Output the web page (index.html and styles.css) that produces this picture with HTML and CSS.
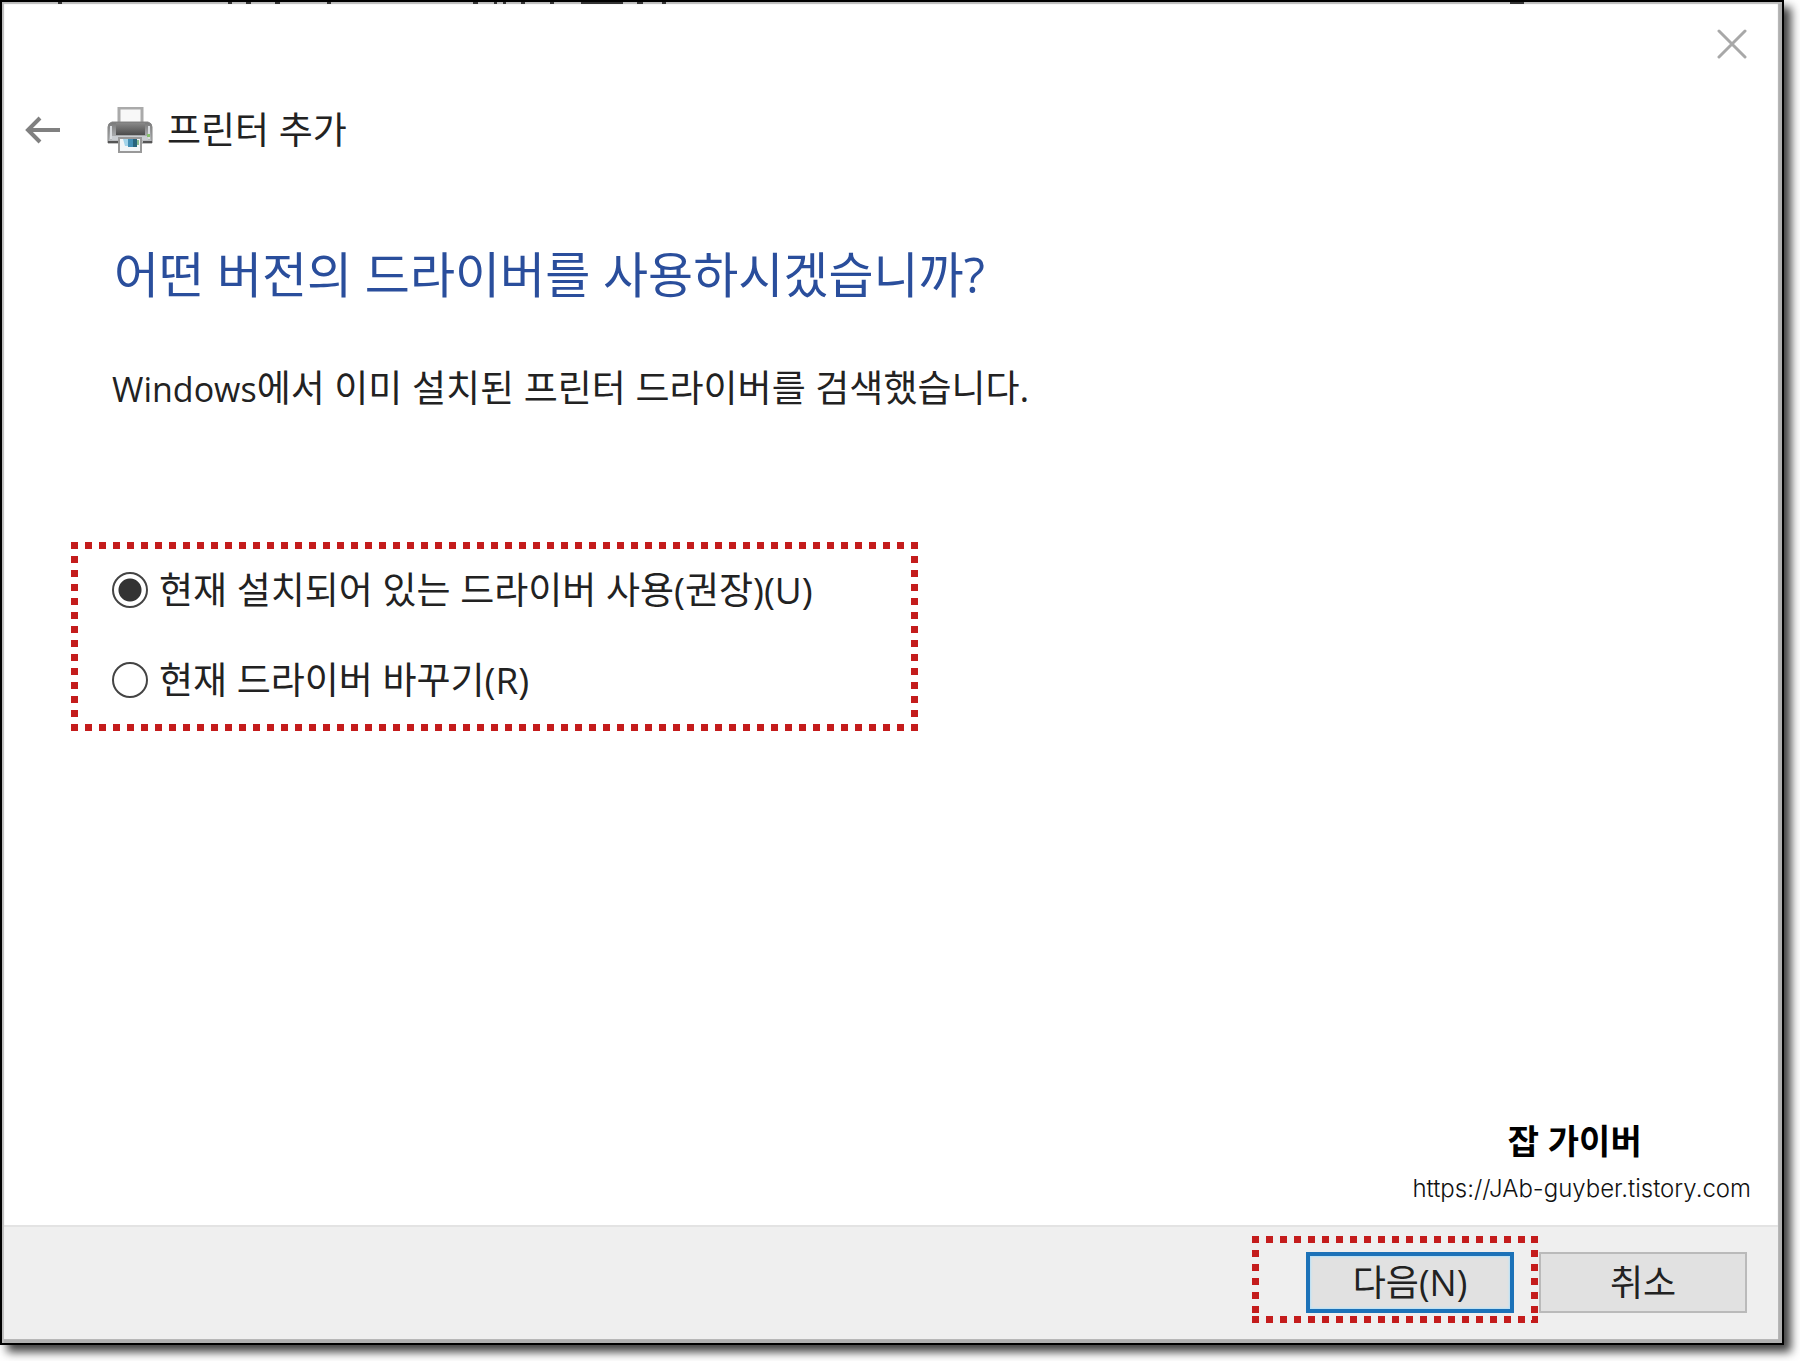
FILE: index.html
```html
<!DOCTYPE html>
<html lang="ko">
<head>
    <meta charset="UTF-8">
    <meta name="viewport" content="width=device-width, initial-scale=1.0">
    <title>프린터 추가</title>
    <link rel="stylesheet" href="styles.css">
</head>
<body>
    <form class="window">
        <svg class="edge" height="2" aria-hidden="true">
            <path d="M56 1h4M226 1h4M244 1h5M273 1h5M325 1h4M471 1h5M492 1h3M501 1h3M519 1h4M548 1h4M579 1h42M635 1h6M660 1h4M1508 1h14" stroke="#333" stroke-width="2"/>
        </svg>
        <div class="titlebar">
            <button class="close" type="button" aria-label="닫기">
                <svg width="30" height="30" viewBox="0 0 30 30"><path d="M2 2l26 26M28 2L2 28" stroke="#a8a8a8" stroke-width="3" stroke-linecap="round"/></svg>
            </button>
        </div>
        <header class="header">
            <button class="back" type="button" aria-label="뒤로">
                <svg width="36" height="28" viewBox="0 0 36 28"><path d="M35 14H3M15 2L3 14l12 12" fill="none" stroke="#808080" stroke-width="4"/></svg>
            </button>
            <svg class="printer" width="46" height="46" viewBox="0 0 46 46" aria-hidden="true">
                <defs>
                    <linearGradient id="body" x1="0" y1="0" x2="0" y2="1">
                        <stop offset="0" stop-color="#777"/>
                        <stop offset="1" stop-color="#c2c5c8"/>
                    </linearGradient>
                    <linearGradient id="slot" x1="0" y1="0" x2="0" y2="1">
                        <stop offset="0" stop-color="#888"/>
                        <stop offset="1" stop-color="#4c4c4c"/>
                    </linearGradient>
                </defs>
                <path d="M12 16V1h23v15" fill="#f8f8f8" stroke="#aaa" stroke-width="3"/>
                <path d="M5 15h36q4 1 4 5v16H1V20q0-4 4-5z" fill="url(#body)" stroke="#858585" stroke-width="1"/>
                <path d="M4 19v13M42 19v13" stroke="#dadde0" stroke-width="2"/>
                <path d="M9 16h29v12H9z" fill="url(#slot)"/>
                <path d="M5 29h36v4H5z" fill="#c9cdd1"/>
                <path d="M1 35h10M36 35h9" stroke="#555" stroke-width="2"/>
                <path d="M40 27h3v3h-3z" fill="#86c06c"/>
                <path d="M12 31h22v14H12z" fill="#f2f5f7" stroke="#999" stroke-width="2"/>
                <path d="M16 32h5v7h-3z" fill="#a3d4ea"/>
                <path d="M21 32h5v8h-5z" fill="#438fb5"/>
                <path d="M26 32h4v8h-4z" fill="#27647c"/>
                <path d="M30 33h2v5h-2z" fill="#8ab98f"/>
            </svg>
            <h1>프린터 추가</h1>
        </header>
        <main class="content">
            <h2>어떤 버전의 드라이버를 사용하시겠습니까?</h2>
            <p class="desc"><span class="latin">Windows</span>에서 이미 설치된 프린터 드라이버를 검색했습니다.</p>
            <div class="options dotted">
                <label class="option">
                    <input type="radio" name="driver" value="use" checked>
                    <span>현재 설치되어 있는 드라이버 사용(권장)(U)</span>
                </label>
                <label class="option">
                    <input type="radio" name="driver" value="replace">
                    <span>현재 드라이버 바꾸기(R)</span>
                </label>
            </div>
        </main>
        <div class="credit">
            <strong>잡 가이버</strong>
            <a href="https://JAb-guyber.tistory.com">https://JAb-guyber.tistory.com</a>
        </div>
        <footer class="footer">
            <div class="next-wrap dotted">
                <button class="btn next" type="submit">다음(N)</button>
            </div>
            <button class="btn" type="button">취소</button>
        </footer>
    </form>
</body>
</html>
```
FILE: styles.css
```css
* {
    margin: 0;
    padding: 0;
    box-sizing: border-box;
}
body {
    display: flex;
    min-height: 100vh;
    padding: 0 16px 16px 0;
    background: #fff;
    color: #222;
    font-family: "Open Sans", "Noto Sans CJK KR", sans-serif;
    font-size: 37px;
    line-height: 48px;
}
button {
    border: none;
    background: none;
    font: inherit;
    color: inherit;
}
svg {
    display: block;
}

/* Window frame */
.window {
    position: relative;
    display: flex;
    flex-direction: column;
    flex: 1;
    border: 2px solid #000;
    background: #fff;
    box-shadow: inset 2px 2px 1px #bbb, inset -4px -4px 1px #b0b0b0, 7px 7px 9px rgba(0, 0, 0, 0.75);
}
.edge {
    position: absolute;
    top: 0;
    left: 0;
    width: 100%;
}
.titlebar {
    display: flex;
    justify-content: flex-end;
    padding: 27px 35px 0 0;
}
.close {
    width: 30px;
    height: 30px;
}

/* Header */
.header {
    display: flex;
    align-items: center;
    padding: 47px 23px 0;
}
.printer {
    margin: 0 14px 0 46px;
}
h1 {
    font-size: 37px;
    font-weight: 400;
}

/* Content */
.content {
    flex: 1;
    padding: 88px 69px 0;
}
h2 {
    padding-left: 43px;
    color: #2a4e9c;
    font-size: 49px;
    font-weight: 400;
    line-height: 64px;
}
.desc {
    padding: 58px 0 0 41px;
}
.latin {
    font-size: 34px;
}
.dotted {
    background:
        linear-gradient(90deg, #c41c1c 50%, transparent 50%) left top / 14px 7px repeat-x,
        linear-gradient(90deg, #c41c1c 50%, transparent 50%) left bottom / 14px 7px repeat-x,
        linear-gradient(#c41c1c 50%, transparent 50%) left top / 7px 14px repeat-y,
        linear-gradient(#c41c1c 50%, transparent 50%) right top / 7px 14px repeat-y;
}
.options {
    display: flex;
    flex-direction: column;
    gap: 42px;
    width: 847px;
    max-width: 100%;
    margin-top: 129px;
    padding: 24px 41px 27px;
}
.option {
    display: flex;
    align-items: center;
    gap: 11px;
}
.option input {
    appearance: none;
    flex: none;
    width: 36px;
    height: 36px;
    border: 2px solid #444;
    border-radius: 50%;
    background: #fff;
}
.option input:checked {
    background: radial-gradient(circle, #333 11px, #fff 12px);
}

/* Credit */
.credit {
    display: flex;
    flex-direction: column;
    align-items: center;
    align-self: flex-end;
    margin-right: 31px;
    padding-bottom: 12px;
    color: #000;
}
.credit strong {
    padding-right: 14px;
    font-size: 34px;
    font-weight: 700;
}
.credit a {
    color: #111;
    font-family: Inter, sans-serif;
    font-size: 24px;
    font-weight: 300;
    text-decoration: none;
}

/* Footer */
.footer {
    display: flex;
    align-items: flex-start;
    gap: 1px;
    justify-content: flex-end;
    margin: 0 4px 4px 2px;
    padding: 9px 31px 16px;
    border-top: 2px solid #e3e3e3;
    background: #efefef;
}
.next-wrap {
    padding: 16px 24px 10px 54px;
}
.footer > .btn {
    margin-top: 16px;
}
.btn {
    display: block;
    width: 208px;
    height: 61px;
    border: 2px solid #bababa;
    background: #e1e1e1;
    font-size: 36px;
}
.next {
    border: 4px solid #1c72b8;
    box-shadow: inset 0 0 2px 1px #b5e2fa;
}
```
